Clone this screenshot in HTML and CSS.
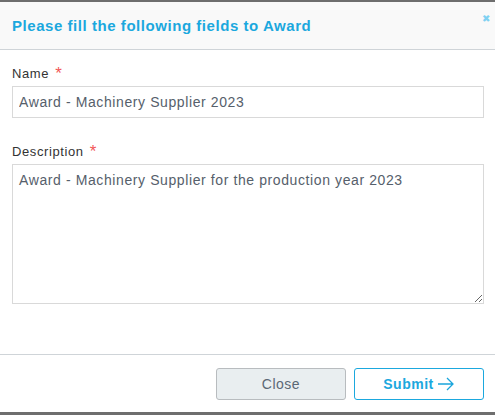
FILE: index.html
```html
<!DOCTYPE html>
<html>
<head>
<meta charset="utf-8">
<link rel="stylesheet" href="styles.css">
</head>
<body>
<div class="modal">
  <div class="modal-header">
    <h1 class="modal-title">Please fill the following fields to Award</h1>
    <span class="close-x">&#x2716;</span>
  </div>
  <div class="modal-body">
    <div class="field">
      <label class="label">Name <span class="req">*</span></label>
      <input class="input" type="text" value="Award - Machinery Supplier 2023">
    </div>
    <div class="field">
      <label class="label">Description <span class="req">*</span></label>
      <textarea class="textarea">Award - Machinery Supplier for the production year 2023</textarea>
    </div>
  </div>
  <div class="modal-footer">
    <button class="btn btn-close">Close</button>
    <button class="btn btn-submit">Submit
      <svg class="arrow" width="18" height="14" viewBox="0 0 18 14"><path d="M1 7H16M10 1L16 7L10 13" fill="none" stroke="#1aa5dc" stroke-width="1.3"/></svg>
    </button>
  </div>
</div>
</body>
</html>
```
FILE: styles.css
```css
html, body { margin: 0; padding: 0; }
body {
  background: #6e6e6e;
  width: 495px;
  height: 415px;
  overflow: hidden;
  font-family: "Liberation Sans", Arial, sans-serif;
}
.modal {
  margin-top: 2px;
  width: 496px;
  height: 410px;
  background: #fff;
  display: flex;
  flex-direction: column;
}
.modal-header {
  height: 47px;
  background: #f9f9f9;
  border-bottom: 1px solid #cfd4d8;
  display: flex;
  align-items: center;
  padding: 0 12px;
  position: relative;
}
.modal-title {
  margin: 0;
  font-size: 15px;
  font-weight: bold;
  color: #1ba8de;
  letter-spacing: 0.55px;
}
.close-x {
  position: absolute;
  right: 6px;
  top: 11px;
  font-size: 10px;
  color: #7fd1f2;
}
.modal-body {
  flex: 1;
  padding: 16px 12px 0 12px;
}
.field { display: flex; flex-direction: column; }
.field + .field { margin-top: 26px; }
.label {
  font-size: 13px;
  line-height: 16px;
  height: 16px;
  color: #333;
  letter-spacing: 0.6px;
  margin-bottom: 4px;
}
.req { color: #f25757; font-size: 17px; line-height: 0; margin-left: 2px; vertical-align: -1px; }
.input, .textarea {
  box-sizing: border-box;
  width: 472px;
  border: 1px solid #d9d9d9;
  font-family: "Liberation Sans", Arial, sans-serif;
  font-size: 14px;
  color: #56606b;
  letter-spacing: 0.6px;
  padding: 0 6px;
  outline: none;
}
.input { height: 32px; }
.textarea { height: 140px; padding-top: 7px; resize: vertical; display: block; }
.modal-footer {
  border-top: 1px solid #cfd4d8;
  padding: 13px 12px 12px 12px;
  display: flex;
  justify-content: flex-end;
  gap: 8px;
}
.btn {
  width: 130px;
  height: 32px;
  border-radius: 3px;
  font-family: "Liberation Sans", Arial, sans-serif;
  font-size: 14px;
  display: flex;
  align-items: center;
  justify-content: center;
  gap: 3px;
  letter-spacing: 0.5px;
}
.btn-close {
  background: #e9eef0;
  border: 1px solid #b8bcbf;
  color: #5b6875;
}
.btn-submit {
  background: #fff;
  border: 1px solid #1ba8de;
  color: #1ba8de;
  font-weight: bold;
}
.arrow { display: block; }
```
